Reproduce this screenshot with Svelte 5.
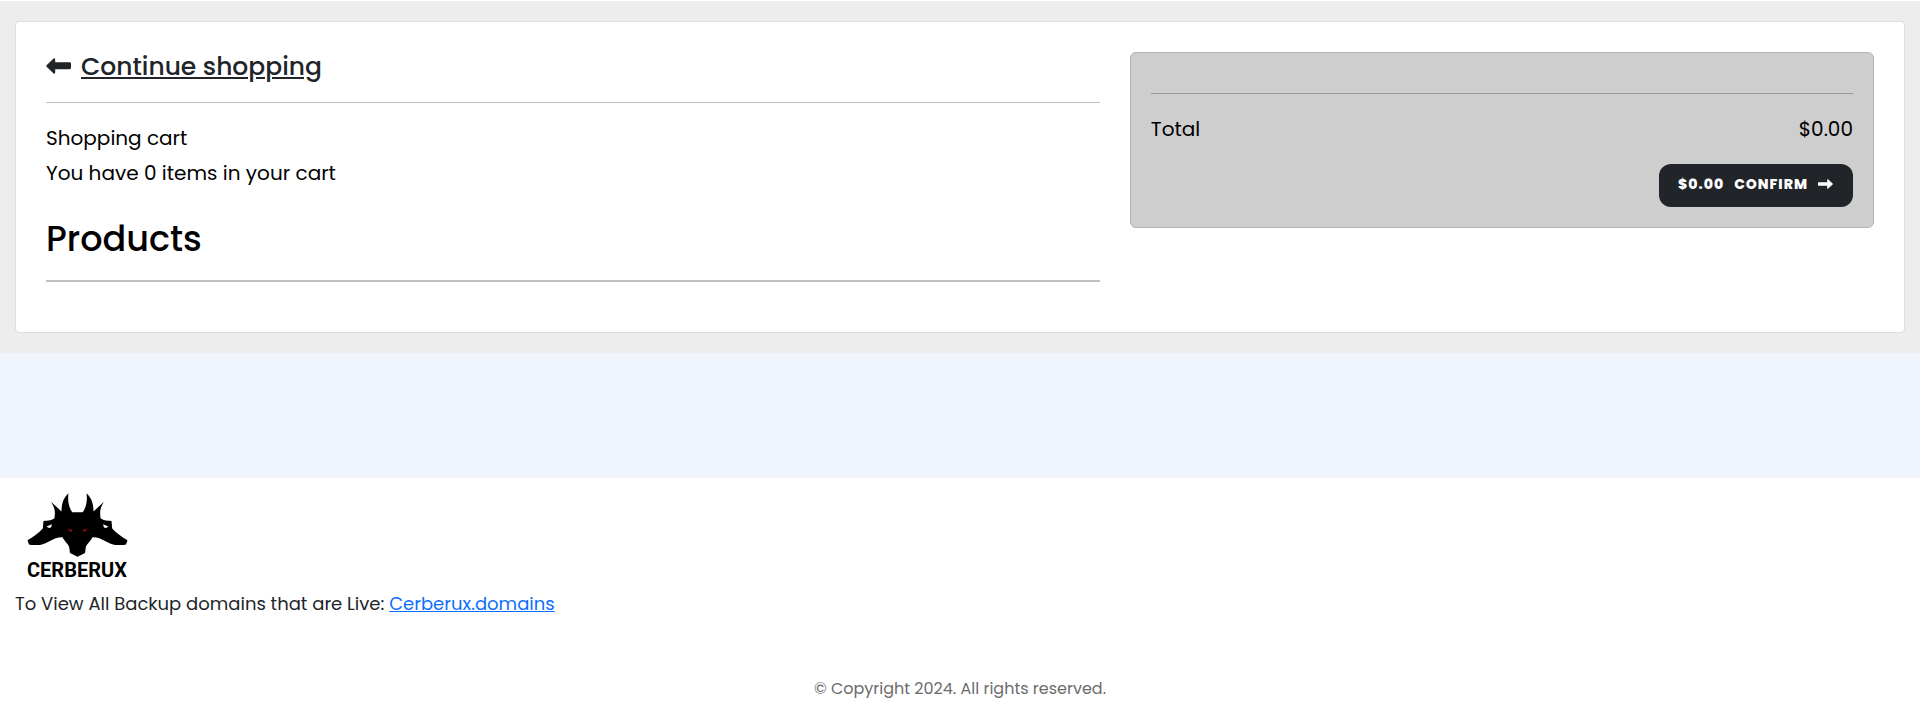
<script>
	let items = $state([]);

	const total = $derived(items.reduce((sum, item) => sum + item.price, 0));
	const price = $derived('$' + total.toFixed(2));
</script>

<section class="cart">
	<div class="card">
		<div class="row">
			<div class="col-left">
				<h5>
					<a href="#shop">
						<svg class="arrow" viewBox="0 0 25 18" aria-hidden="true">
							<path d="M7.600.6Q9.200-.4 9.200 1.800V4.200H23.600Q25 4.200 25 5.600V9.800Q25 11.200 23.600 11.200H9.200V14.200Q9.200 16.400 7.600 15.400L.6 8.700Q0 8 .6 7.300Z" />
						</svg>
						<span>Continue shopping</span>
					</a>
				</h5>
				<hr />
				<p>Shopping cart</p>
				<p>You have {items.length} items in your cart</p>
				<h2>Products</h2>
				<hr class="thick" />
			</div>
			<div class="col-right">
				<div class="summary">
					<hr />
					<div class="total">
						<span>Total</span>
						<span>{price}</span>
					</div>
					<button type="button">
						<span>{price}</span>
						<span>CONFIRM</span>
						<svg class="arrow-small" viewBox="0 0 15 10" aria-hidden="true">
							<path d="M.9 3.200H9.200V1.100Q9.200-.3 10.300.6L14.600 4.400Q15.200 5 14.600 5.600L10.300 9.400Q9.200 10.300 9.200 8.900V6.800H.9Q0 6.800 0 5.900V4.100Q0 3.200.9 3.200Z" />
						</svg>
					</button>
				</div>
			</div>
		</div>
	</div>
</section>

<div class="band"></div>

<footer>
	<a class="logo" href="#home" aria-label="Cerberux">
		<svg viewBox="0 0 130 100" aria-hidden="true">
			<path d="M43.500 13.500C42.500 20 43.500 27 47.300 32.200H57.700C61.500 27 62.500 20 61.500 13.500C66 17 68.500 23 68.500 31.500L79 21.700C75.500 27 74.500 31 75.500 38C77 40 81.500 40.700 86.500 41L87.200 48.500C91 53 97 57 102.500 60.200L101 64.500L98.500 65H90C82 64 77 57 67.500 57.300C65 62 60.700 65 60.700 68L60 73L52.500 76.800L45 73L44.300 68C44.300 65 40 62 37.500 57.300C28 57 23 64 15 65H6.500L4 64.500L2.500 60.200C8 57 14 53 17.800 48.500L18.500 41C23.500 40.700 28 40 29.500 38C30.500 31 29.500 27 26 21.700L36.500 31.500C36.500 23 39 17 43.500 13.500Z" />
			<path class="light" d="M21.500 46.500L27 44.300L26 47.500L24 48Z M83.500 46.500L78 44.300L79 47.500L81 48Z" />
			<path class="red" d="M42 48.500L47.500 50L46.500 52L44.500 51Z M63 48.500L57.500 50L58.500 52L60.500 51Z" />
			<text x="2" y="97">CERBERUX</text>
		</svg>
	</a>
	<p>To View All Backup domains that are Live: <a href="#domains">Cerberux.domains</a></p>
	<small>© Copyright 2024. All rights reserved.</small>
</footer>

<style>
	:global(body) {
		background: #fff;
		color: #212529;
		font-family: Poppins, Inter, "Open Sans", sans-serif;
	}

	h2, h5, p {
		margin: 0;
	}

	hr {
		margin: 0;
		border: 0;
		border-top: 1px solid #bfbfbf;
	}

	.cart {
		margin-top: 1px;
		padding: 20px 15px;
		background: #ededed;
	}

	.card {
		padding: 30px;
		border: 1px solid #dedede;
		border-radius: 4px;
		background: #fff;
		color: #000;
		font-size: 20px;
		line-height: 30px;
	}

	.row {
		display: grid;
		grid-template-columns: 7fr 5fr;
		margin: 0 -15px;
	}

	.col-left, .col-right {
		padding: 0 15px;
	}

	h5 {
		margin-bottom: 20px;
		font-size: 25px;
		font-weight: 500;
	}

	h5 a {
		display: flex;
		align-items: center;
		gap: 10px;
		color: #212529;
		text-decoration: none;
	}

	h5 span {
		text-decoration: underline;
	}

	.arrow {
		width: 25px;
		height: 18px;
		fill: #212529;
	}

	p {
		margin-bottom: 5px;
	}

	.col-left hr {
		margin-bottom: 20px;
	}

	h2 {
		margin: 30px 0 20px;
		font-size: 35px;
		font-weight: 500;
		line-height: 42px;
	}

	.col-left .thick {
		border-top-width: 2px;
	}

	.summary {
		padding: 40px 20px 20px;
		border: 1px solid #b3b3b3;
		border-radius: 6px;
		background: #cecece;
	}

	.summary hr {
		border-color: #999;
	}

	.total {
		display: flex;
		justify-content: space-between;
		margin: 20px 0;
	}

	button {
		display: flex;
		align-items: center;
		gap: 10px;
		margin-left: auto;
		padding: 10px 20px 13px 19px;
		border: 0;
		border-radius: 12px;
		background: #212529;
		color: #fff;
		font: inherit;
		font-size: 14px;
		font-weight: 800;
		line-height: 20px;
		letter-spacing: 1px;
	}

	.arrow-small {
		width: 15px;
		height: 10px;
		fill: #fff;
	}

	.band {
		height: 125px;
		background: #eff4fd;
	}

	footer {
		padding: 2px 15px 14px;
		font-size: 18px;
		line-height: 28px;
	}

	.logo {
		display: block;
		padding-left: 10px;
	}

	.logo svg {
		display: block;
		width: 130px;
		height: 100px;
		overflow: visible;
	}

	.light {
		fill: #fff;
	}

	.red {
		fill: #8a1010;
	}

	text {
		font-family: Roboto, sans-serif;
		font-size: 20px;
		font-weight: 700;
	}

	footer p {
		padding-top: 10px;
		margin-bottom: 57px;
	}

	footer p a {
		color: #0d6efd;
	}

	small {
		display: block;
		color: #6c6c6c;
		font-size: 16px;
		text-align: center;
	}
</style>
